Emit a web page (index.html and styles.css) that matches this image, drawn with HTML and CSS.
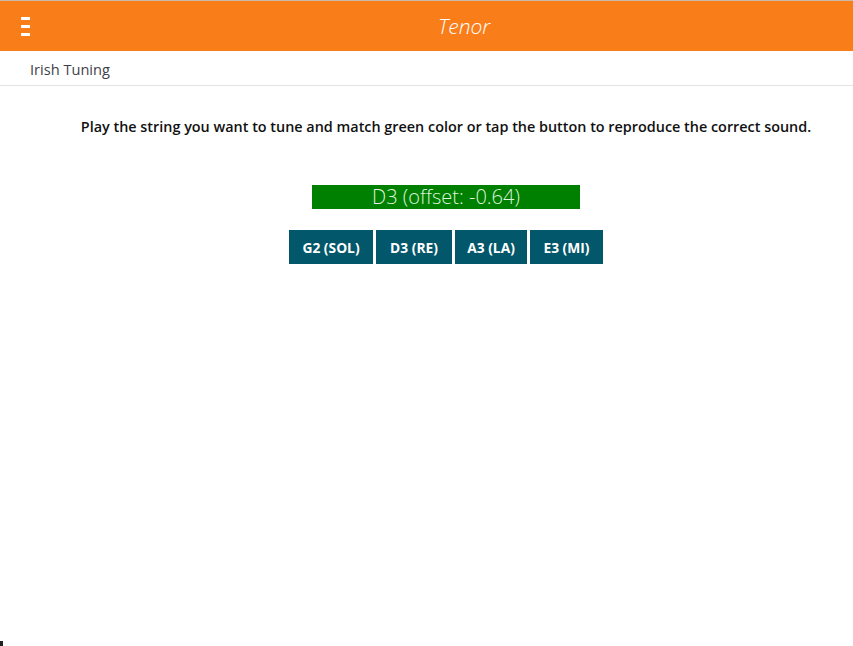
FILE: index.html
```html
<!DOCTYPE html>
<html>
<head>
<meta charset="utf-8">
<link rel="stylesheet" href="styles.css">
</head>
<body>
<header class="topbar">
  <div class="menu-btn"><span></span><span></span><span></span></div>
  <div class="title">Tenor</div>
</header>
<div class="subbar">Irish Tuning</div>
<main class="content">
  <p class="intro">Play the string you want to tune and match green color or tap the button to reproduce the correct sound.</p>
  <div class="meter">D3 (offset: -0.64)</div>
  <div class="notes">
    <button class="note">G2 (SOL)</button>
    <button class="note">D3 (RE)</button>
    <button class="note">A3 (LA)</button>
    <button class="note">E3 (MI)</button>
  </div>
</main>
<div class="corner"></div>
</body>
</html>
```
FILE: styles.css
```css
html, body { margin: 0; padding: 0; background: #fff; }
body { font-family: "Open Sans", "Noto Sans", sans-serif; height: 646px; position: relative; overflow: hidden; }
.topbar { height: 51px; background: #F97D19; display: flex; align-items: center; border-top: 1px solid #c9b9a6; box-sizing: border-box; }
.menu-btn { width: 9px; margin-left: 21px; display: flex; flex-direction: column; gap: 5px; }
.menu-btn span { display: block; height: 3px; background: #fff; }
.title { margin-left: 408px; color: #fff; font-style: italic; font-weight: 300; font-size: 21px; }
.subbar { height: 35px; box-sizing: border-box; border-bottom: 1px solid #e3e3e3; padding-left: 30px; padding-top: 8px; font-size: 14.6px; color: #3f3f4a; }
.content { display: flex; flex-direction: column; align-items: center; padding-left: 39px; }
.intro { margin: 31px 0 0 0; font-size: 14.4px; font-weight: 600; color: #111; white-space: nowrap; }
.meter { margin-top: 49px; width: 268px; height: 24px; background: #008000; color: #dff2df; font-weight: 300; font-size: 20px; text-align: center; line-height: 23px; }
.notes { margin-top: 21px; display: flex; gap: 3px; }
.note { height: 34px; border: none; background: #02576A; color: #fff; font-family: inherit; font-weight: 700; font-size: 13.8px; padding: 0; white-space: nowrap; }
.note:nth-child(1) { width: 84px; }
.note:nth-child(2) { width: 76px; }
.note:nth-child(3) { width: 72px; }
.note:nth-child(4) { width: 73px; }
.corner { position: absolute; left: 0; bottom: 0; width: 3px; height: 5px; background: #222; }
```
